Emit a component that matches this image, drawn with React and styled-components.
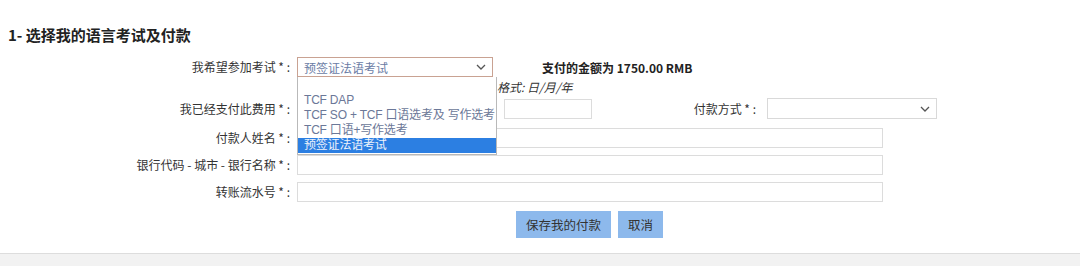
// App.jsx

import React from 'react';
import styled, { createGlobalStyle } from 'styled-components';

const GlobalStyle = createGlobalStyle`
  html, body {
    margin: 0;
    padding: 0;
    background: #ffffff;
  }
  body {
    font-family: "Noto Sans CJK SC", "Noto Sans", sans-serif;
    font-size: 12px;
    color: #333333;
  }
`;

const Page = styled.div`
  height: 266px;
  display: flex;
  flex-direction: column;
  overflow: hidden;
`;

const Main = styled.div`
  padding: 26px 0 0 8px;
`;

const Title = styled.h2`
  margin: 0;
  font-size: 15px;
  line-height: 18px;
  font-weight: bold;
  color: #222;
`;

const Row = styled.div`
  display: grid;
  grid-template-columns: 282px auto;
  column-gap: 7px;
  align-items: center;
  margin-top: ${(p) => p.$mt}px;
`;

const Label = styled.label`
  text-align: right;
  white-space: nowrap;
  line-height: 20px;
  color: #333;
`;

const Field = styled.div`
  display: flex;
  align-items: center;
`;

const SelectWrap = styled.div`
  position: relative;
  width: ${(p) => p.$w}px;
  margin-left: ${(p) => p.$ml || 0}px;
`;

const SelectBox = styled.div`
  box-sizing: border-box;
  height: ${(p) => p.$h || 20}px;
  border: 1px solid ${(p) => (p.$focus ? '#c9a292' : '#d9d9d9')};
  display: flex;
  align-items: center;
  justify-content: space-between;
  padding: 0 6px 0 6px;
  color: #6a7ca5;
  font-size: 12px;
`;

const DropList = styled.ul`
  position: absolute;
  top: 100%;
  left: 0;
  width: 200px;
  box-sizing: border-box;
  margin: 0;
  padding: 0 0 1px;
  list-style: none;
  background: #fff;
  border: 1px solid #b9b9b9;
  border-top: none;
  z-index: 5;
`;

const Option = styled.li`
  height: ${(p) => (p.$blank ? 16 : 15)}px;
  line-height: 15px;
  padding: 0 6px;
  font-family: "Liberation Sans", "Noto Sans CJK SC", sans-serif;
  font-size: 12px;
  letter-spacing: -0.2px;
  white-space: nowrap;
  overflow: hidden;
  color: ${(p) => (p.$active ? '#eef3fb' : '#6b7898')};
  background: ${(p) => (p.$active ? '#2c7fe2' : 'transparent')};
`;

const Amount = styled.span`
  margin-left: 49px;
  font-weight: bold;
  color: #222;
`;

const Hint = styled.span`
  margin-left: 200px;
  font-style: italic;
  line-height: 16px;
  color: #333;
`;

const Input = styled.input`
  box-sizing: border-box;
  width: ${(p) => p.$w}px;
  height: 20px;
  margin: 0 0 0 ${(p) => p.$ml || 0}px;
  border: 1px solid #dcdcdc;
  padding: 0 4px;
  font-family: inherit;
  font-size: 12px;
  background: #fff;
`;

const SideLabel = styled.span`
  width: ${(p) => p.$w}px;
  text-align: right;
  white-space: nowrap;
  color: #333;
`;

const ButtonBar = styled.div`
  display: flex;
  gap: 7px;
  margin-left: 219px;
`;

const Button = styled.button`
  height: 27px;
  padding: 0 ${(p) => p.$px}px;
  border: none;
  background: #8db9ec;
  color: #333;
  font-family: inherit;
  font-size: 12.5px;
  cursor: pointer;
`;

const Footer = styled.div`
  margin-top: auto;
  height: 12px;
  border-top: 1px solid #dddddd;
  background: #f2f2f2;
`;

const Chevron = () => (
  <svg width="10" height="6" viewBox="0 0 10 6">
    <path d="M1 1 L5 5 L9 1" fill="none" stroke="#555" strokeWidth="1.3" />
  </svg>
);

const options = ['', 'TCF DAP', 'TCF SO + TCF 口语选考及 写作选考', 'TCF 口语+写作选考', '预签证法语考试'];

const App = () => {
  return (
    <Page>
      <GlobalStyle />
      <Main>
        <Title>1- 选择我的语言考试及付款</Title>

        <Row $mt={13}>
          <Label>我希望参加考试 * :</Label>
          <Field>
            <SelectWrap $w={196}>
              <SelectBox $focus>
                <span>预签证法语考试</span>
                <Chevron />
              </SelectBox>
              <DropList>
                {options.map((o, i) => (
                  <Option key={i} $blank={o === ''} $active={i === options.length - 1}>
                    {o}
                  </Option>
                ))}
              </DropList>
            </SelectWrap>
            <Amount>支付的金额为 1750.00 RMB</Amount>
          </Field>
        </Row>

        <Row $mt={2}>
          <span />
          <Field>
            <Hint>格式: 日/月/年</Hint>
          </Field>
        </Row>

        <Row $mt={3}>
          <Label>我已经支付此费用 * :</Label>
          <Field>
            <Input $w={200} />
            <Input $w={88} $ml={7} />
            <SideLabel $w={164}>付款方式 * :</SideLabel>
            <SelectWrap $w={170} $ml={11}>
              <SelectBox $h={21}>
                <span />
                <Chevron />
              </SelectBox>
            </SelectWrap>
          </Field>
        </Row>

        <Row $mt={9}>
          <Label>付款人姓名 * :</Label>
          <Field>
            <Input $w={586} />
          </Field>
        </Row>

        <Row $mt={7}>
          <Label>银行代码 - 城市 - 银行名称 * :</Label>
          <Field>
            <Input $w={586} />
          </Field>
        </Row>

        <Row $mt={7}>
          <Label>转账流水号 * :</Label>
          <Field>
            <Input $w={586} />
          </Field>
        </Row>

        <Row $mt={9}>
          <span />
          <ButtonBar>
            <Button $px={10}>保存我的付款</Button>
            <Button $px={10}>取消</Button>
          </ButtonBar>
        </Row>
      </Main>
      <Footer />
    </Page>
  );
};

export default App;
